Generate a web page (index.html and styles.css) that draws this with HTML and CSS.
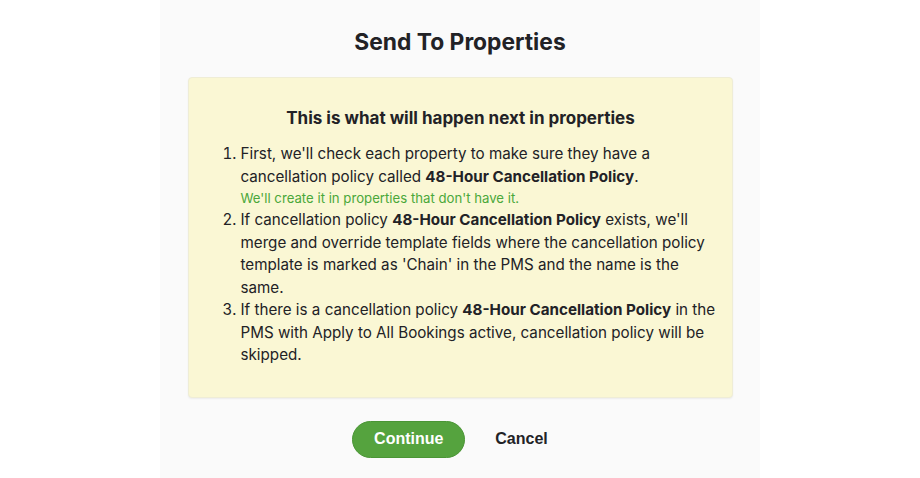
FILE: index.html
```html
<!DOCTYPE html>
<html>
<head>
<meta charset="utf-8">
<link rel="stylesheet" href="styles.css">
</head>
<body>
<div class="page">
  <div class="panel">
    <h1 class="title">Send To Properties</h1>
    <div class="notice">
      <h2 class="notice-title">This is what will happen next in properties</h2>
      <ol class="steps">
        <li>First, we'll check each property to make sure they have a cancellation policy called <b>48-Hour Cancellation Policy</b>.
          <div class="hint">We'll create it in properties that don't have it.</div>
        </li>
        <li>If cancellation policy <b>48-Hour Cancellation Policy</b> exists, we'll merge and override template fields where the cancellation policy template is marked as 'Chain' in the PMS and the name is the same.</li>
        <li>If there is a cancellation policy <b>48-Hour Cancellation Policy</b> in the PMS with Apply to All Bookings active, cancellation policy will be skipped.</li>
      </ol>
    </div>
    <div class="actions">
      <button class="btn-primary">Continue</button>
      <button class="btn-link">Cancel</button>
    </div>
  </div>
</div>
</body>
</html>
```
FILE: styles.css
```css
html, body {
  margin: 0;
  padding: 0;
  background: #ffffff;
}
body {
  font-family: Inter, "Noto Sans", sans-serif;
  color: #222226;
}
.page {
  display: flex;
  justify-content: center;
  height: 478px;
}
.panel {
  width: 600px;
  background: #fafafa;
  display: flex;
  flex-direction: column;
  align-items: center;
  padding-top: 28px;
  box-sizing: border-box;
}
.title {
  margin: 0;
  font-size: 22.8px;
  font-weight: 700;
  line-height: 28px;
  color: #222226;
}
.notice {
  margin-top: 21px;
  width: 545px;
  box-sizing: border-box;
  background: #faf7d4;
  border: 1px solid #efedd6;
  border-radius: 4px;
  box-shadow: 0 1px 2px rgba(0,0,0,0.06);
  padding: 28px 15px 30px 16px;
}
.notice-title {
  margin: 0;
  text-align: center;
  font-size: 17px;
  font-weight: 700;
  line-height: 24px;
}
.steps {
  margin: 13px 0 0 0;
  padding-left: 36px;
  font-size: 15.2px;
  line-height: 22.5px;
}
.steps b {
  font-weight: 700;
}
.hint {
  color: #4aa83a;
  font-size: 13.2px;
  line-height: 21px;
}
.actions {
  margin-top: 23px;
  margin-right: 20px;
  display: flex;
  align-items: center;
  gap: 30px;
}
.btn-primary {
  width: 113px;
  height: 37px;
  border-radius: 19px;
  background: #55a33e;
  border: 1px solid #4a9535;
  color: #ffffff;
  font-family: "Liberation Sans", Arial, sans-serif;
  font-weight: 700;
  font-size: 16px;
  cursor: pointer;
}
.btn-link {
  background: none;
  border: none;
  padding: 0;
  font-family: "Liberation Sans", Arial, sans-serif;
  font-weight: 700;
  font-size: 16px;
  color: #222226;
  cursor: pointer;
}
```
